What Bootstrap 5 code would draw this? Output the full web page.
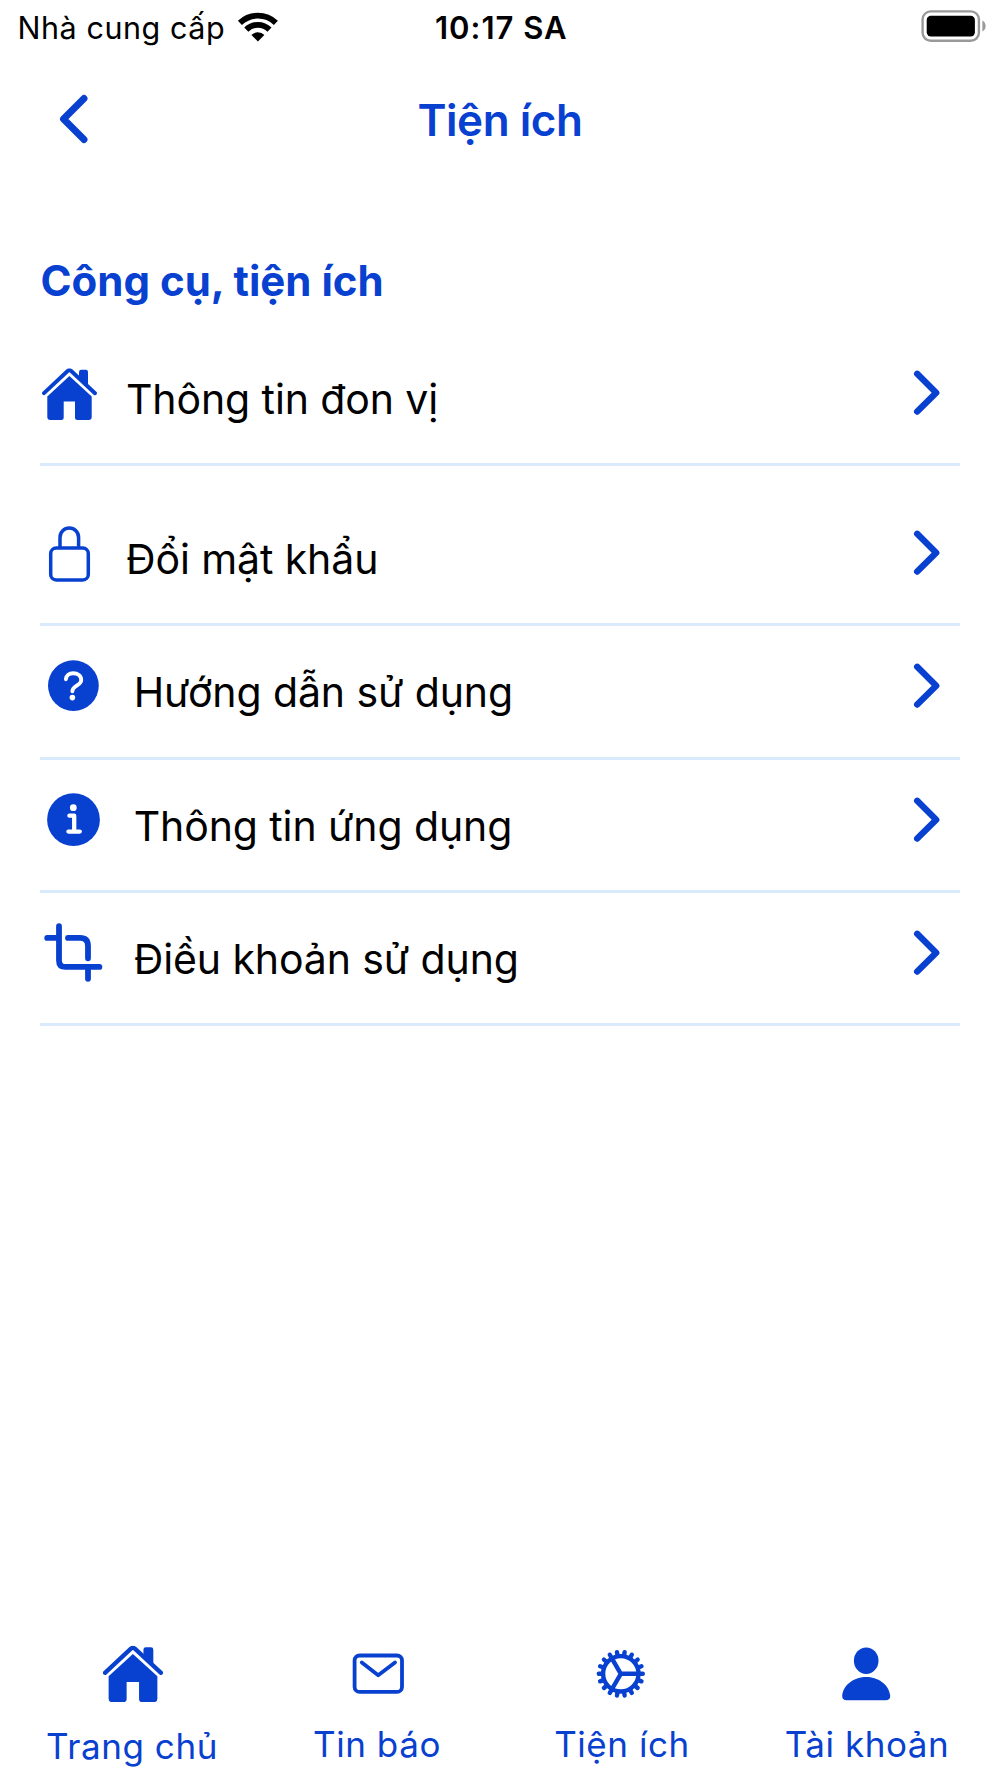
<!DOCTYPE html>
<html lang="vi">
<head>
<meta charset="utf-8">
<meta name="viewport" content="width=device-width, initial-scale=1">
<title>Tiện ích</title>
<link href="https://cdn.jsdelivr.net/npm/bootstrap@5.3.0/dist/css/bootstrap.min.css" rel="stylesheet">
<style>
  :root { --brand: #0840d0; --rule: #d9eafc; }
  body { font-family: Inter, "Noto Sans", sans-serif; color: #000; background: #fff; }
  svg { display: block; flex: none; overflow: visible; }
  .brand { color: var(--brand); }
  .screen { height: 1778px; }
  .statusbar { height: 56px; font-size: 30.5px; line-height: 56px; padding: 0 14px 0 17.5px; }
  .carrier { letter-spacing: .55px; margin-right: 11.5px; }
  .clock { font-size: 31px; font-weight: 600; letter-spacing: 1px; margin-left: -1px; }
  .topbar { height: 128px; padding: 0 50px; }
  .topbar h1 { font-size: 44px; font-weight: 600; line-height: 60px; letter-spacing: -.45px; }
  .tools { padding: 67px 40px 0; }
  .tools h2 { font-size: 42px; font-weight: 700; line-height: 60px; letter-spacing: 0; margin: 0 0 22px .5px; }
  .tool { height: 133.33px; border-bottom: 3px solid var(--rule); font-size: 41px; letter-spacing: -.1px; color: #000; }
  .tool:first-child { margin-bottom: 26.67px; }
  .tool-label { line-height: 60px; padding-top: 2px; margin-left: 23.7px; }
  .tool-label.near { margin-left: 16px; }
  .tabs { height: 148px; padding: 0 10.5px 0 9.5px; font-size: 35px; line-height: 48px; letter-spacing: .57px; }
  .tab-home { padding-top: 2px; }
</style>
</head>
<body>
<svg width="0" height="0" class="position-absolute" aria-hidden="true">
  <symbol id="house" viewBox="2 10.3 55 51.7" preserveAspectRatio="none">
    <path d="M39 22V14q0-2.2 2.2-2.2h4.6q2.2 0 2.2 2.2V28L44 26Z" fill="currentColor"/>
    <path d="M4 35.2 27.6 13q1.8-1.6 3.6 0L55 35.2" fill="none" stroke="currentColor" stroke-width="3.9" stroke-linecap="round"/>
    <path d="M29.4 18 51.7 38.4V59q0 3-3 3H37.5q-2.5 0-2.5-2.5V43.6H23.7v15.9q0 2.5-2.5 2.5H10.3q-3 0-3-3V38.4Z" fill="currentColor"/>
  </symbol>
  <symbol id="chevron" viewBox="0 0 50 80">
    <path d="M7.2 15.8 26.2 34.7 7.2 53.6" fill="none" stroke="currentColor" stroke-width="6.4" stroke-linecap="round" stroke-linejoin="round"/>
  </symbol>
</svg>

<div class="screen d-flex flex-column">
  <div class="statusbar d-flex align-items-center">
    <div class="col d-flex align-items-center">
      <span class="carrier">Nhà cung cấp</span>
      <svg width="42" height="56" viewBox="237 0 42 56" fill="none" stroke="#000" stroke-width="5.8">
        <path d="M239.9 22.9A26 26 0 0 1 275.9 22.9"/>
        <path d="M246.3 29.6A16.4 16.4 0 0 1 269.5 29.6"/>
        <path d="M257.9 41.4 251.4 35A9.2 9.2 0 0 1 264.4 35Z" fill="#000" stroke="none"/>
      </svg>
    </div>
    <span class="clock">10:17 SA</span>
    <div class="col d-flex justify-content-end">
      <svg width="65" height="56" viewBox="921 0 65 56">
        <rect x="922.6" y="11.4" width="56.3" height="29.4" rx="8" fill="none" stroke="#999" stroke-width="2.4"/>
        <rect x="926.7" y="15.7" width="48.2" height="20.8" rx="4.2"/>
        <path d="M982.4 20.6q3.2 1.8 3.2 5.4t-3.2 5.4Z" fill="#999"/>
      </svg>
    </div>
  </div>

  <header class="topbar brand d-flex align-items-center">
    <a href="#" class="brand" aria-label="Quay lại">
      <svg width="50" height="60" viewBox="50 90 50 60" fill="none" stroke="currentColor" stroke-width="6.9" stroke-linecap="round" stroke-linejoin="round"><path d="M84 98.5 63.5 119 84 139.5"/></svg>
    </a>
    <h1 class="flex-grow-1 text-center mb-0">Tiện ích</h1>
    <svg width="50" height="60"></svg>
  </header>

  <main class="tools flex-grow-1">
    <h2 class="brand">Công cụ, tiện ích</h2>
    <div>
      <a href="#" class="tool d-flex align-items-center text-decoration-none">
        <svg class="brand" width="70" height="80"><use href="#house" x="2" y="10.3" width="55" height="51.7"/></svg>
        <span class="tool-label near flex-grow-1">Thông tin đon vị</span>
        <svg class="brand" width="50" height="80"><use href="#chevron"/></svg>
      </a>
      <a href="#" class="tool d-flex align-items-center text-decoration-none">
        <svg class="brand" width="70" height="80" fill="none" stroke="currentColor" stroke-width="3.5">
          <rect x="10.7" y="30.1" width="37.6" height="31.8" rx="5.5"/>
          <path d="M20 30V19.4a9.3 9.3 0 0 1 18.6 0V30"/>
        </svg>
        <span class="tool-label near flex-grow-1">Đổi mật khẩu</span>
        <svg class="brand" width="50" height="80"><use href="#chevron"/></svg>
      </a>
      <a href="#" class="tool d-flex align-items-center text-decoration-none">
        <svg class="brand" width="70" height="80">
          <circle cx="33.4" cy="34.6" r="25.4" fill="currentColor"/>
          <path d="M25.9 28.2C26.2 24.2 29.3 22.2 33.2 22.2 37.6 22.2 41.2 24.9 41.2 29 41.2 34.6 32.4 34.8 32.4 40.2" fill="none" stroke="#fff" stroke-width="3.9" stroke-linecap="round"/>
          <circle cx="32.4" cy="46.6" r="2.8" fill="#fff"/>
        </svg>
        <span class="tool-label flex-grow-1">Hướng dẫn sử dụng</span>
        <svg class="brand" width="50" height="80"><use href="#chevron"/></svg>
      </a>
      <a href="#" class="tool d-flex align-items-center text-decoration-none">
        <svg class="brand" width="70" height="80">
          <circle cx="33.5" cy="34.7" r="26.4" fill="currentColor"/>
          <circle cx="33.3" cy="22.7" r="3.4" fill="#fff"/>
          <path d="M29.4 30.7H34.2V46.6M28.4 46.6H39.8" fill="none" stroke="#fff" stroke-width="4.3" stroke-linecap="round" stroke-linejoin="round"/>
        </svg>
        <span class="tool-label flex-grow-1">Thông tin ứng dụng</span>
        <svg class="brand" width="50" height="80"><use href="#chevron"/></svg>
      </a>
      <a href="#" class="tool d-flex align-items-center text-decoration-none">
        <svg class="brand" width="70" height="80" fill="none" stroke="currentColor" stroke-width="5.8" stroke-linecap="round">
          <path d="M7.2 19.9H19M19 8.2V42.4q0 6.5 6.5 6.5H59.4"/>
          <path d="M28 19.9H40q8 0 8 8V40.3M48 49V60.8"/>
        </svg>
        <span class="tool-label flex-grow-1">Điều khoản sử dụng</span>
        <svg class="brand" width="50" height="80"><use href="#chevron"/></svg>
      </a>
    </div>
  </main>

  <nav class="tabs d-flex">
    <a href="#" class="col brand text-decoration-none d-flex flex-column align-items-center">
      <svg width="80" height="90"><use href="#house" x="10.8" y="15.7" width="60.4" height="56.4"/></svg>
      <span class="tab-home">Trang chủ</span>
    </a>
    <a href="#" class="col brand text-decoration-none d-flex flex-column align-items-center">
      <svg width="80" height="90" fill="none" stroke="currentColor" stroke-width="3.8" stroke-linecap="round" stroke-linejoin="round">
        <rect x="17.6" y="25.5" width="47.4" height="36.4" rx="5"/>
        <path d="M24.8 32.4 41.2 45.2 58 32.4"/>
      </svg>
      <span>Tin báo</span>
    </a>
    <a href="#" class="col brand text-decoration-none d-flex flex-column align-items-center">
      <svg width="80" height="90">
        <g transform="translate(38.8 43.8)" fill="none" stroke="currentColor" stroke-width="4.4">
          <circle r="17.7"/>
          <path d="M0 0H17M0 0-8.5-14.7M0 0-8.5 14.7"/>
          <g stroke-linecap="round" stroke-dasharray="3.5 37" stroke-width="4.4">
            <path id="teeth" d="M-22 0H22"/>
            <use href="#teeth" transform="rotate(20)"/><use href="#teeth" transform="rotate(40)"/>
            <use href="#teeth" transform="rotate(60)"/><use href="#teeth" transform="rotate(80)"/>
            <use href="#teeth" transform="rotate(100)"/><use href="#teeth" transform="rotate(120)"/>
            <use href="#teeth" transform="rotate(140)"/><use href="#teeth" transform="rotate(160)"/>
          </g>
        </g>
      </svg>
      <span>Tiện ích</span>
    </a>
    <a href="#" class="col brand text-decoration-none d-flex flex-column align-items-center">
      <svg width="80" height="90" fill="currentColor">
        <ellipse cx="39.2" cy="30.7" rx="12.3" ry="13.3"/>
        <path d="M15.2 65.5C16.5 54 28 47 39.2 47 50.4 47 61.9 54 63.2 65.5q.2 4.8-4.6 4.8H19.8q-4.8 0-4.6-4.8Z"/>
      </svg>
      <span>Tài khoản</span>
    </a>
  </nav>
</div>
<script src="https://cdn.jsdelivr.net/npm/bootstrap@5.3.0/dist/js/bootstrap.bundle.min.js"></script>
</body>
</html>
